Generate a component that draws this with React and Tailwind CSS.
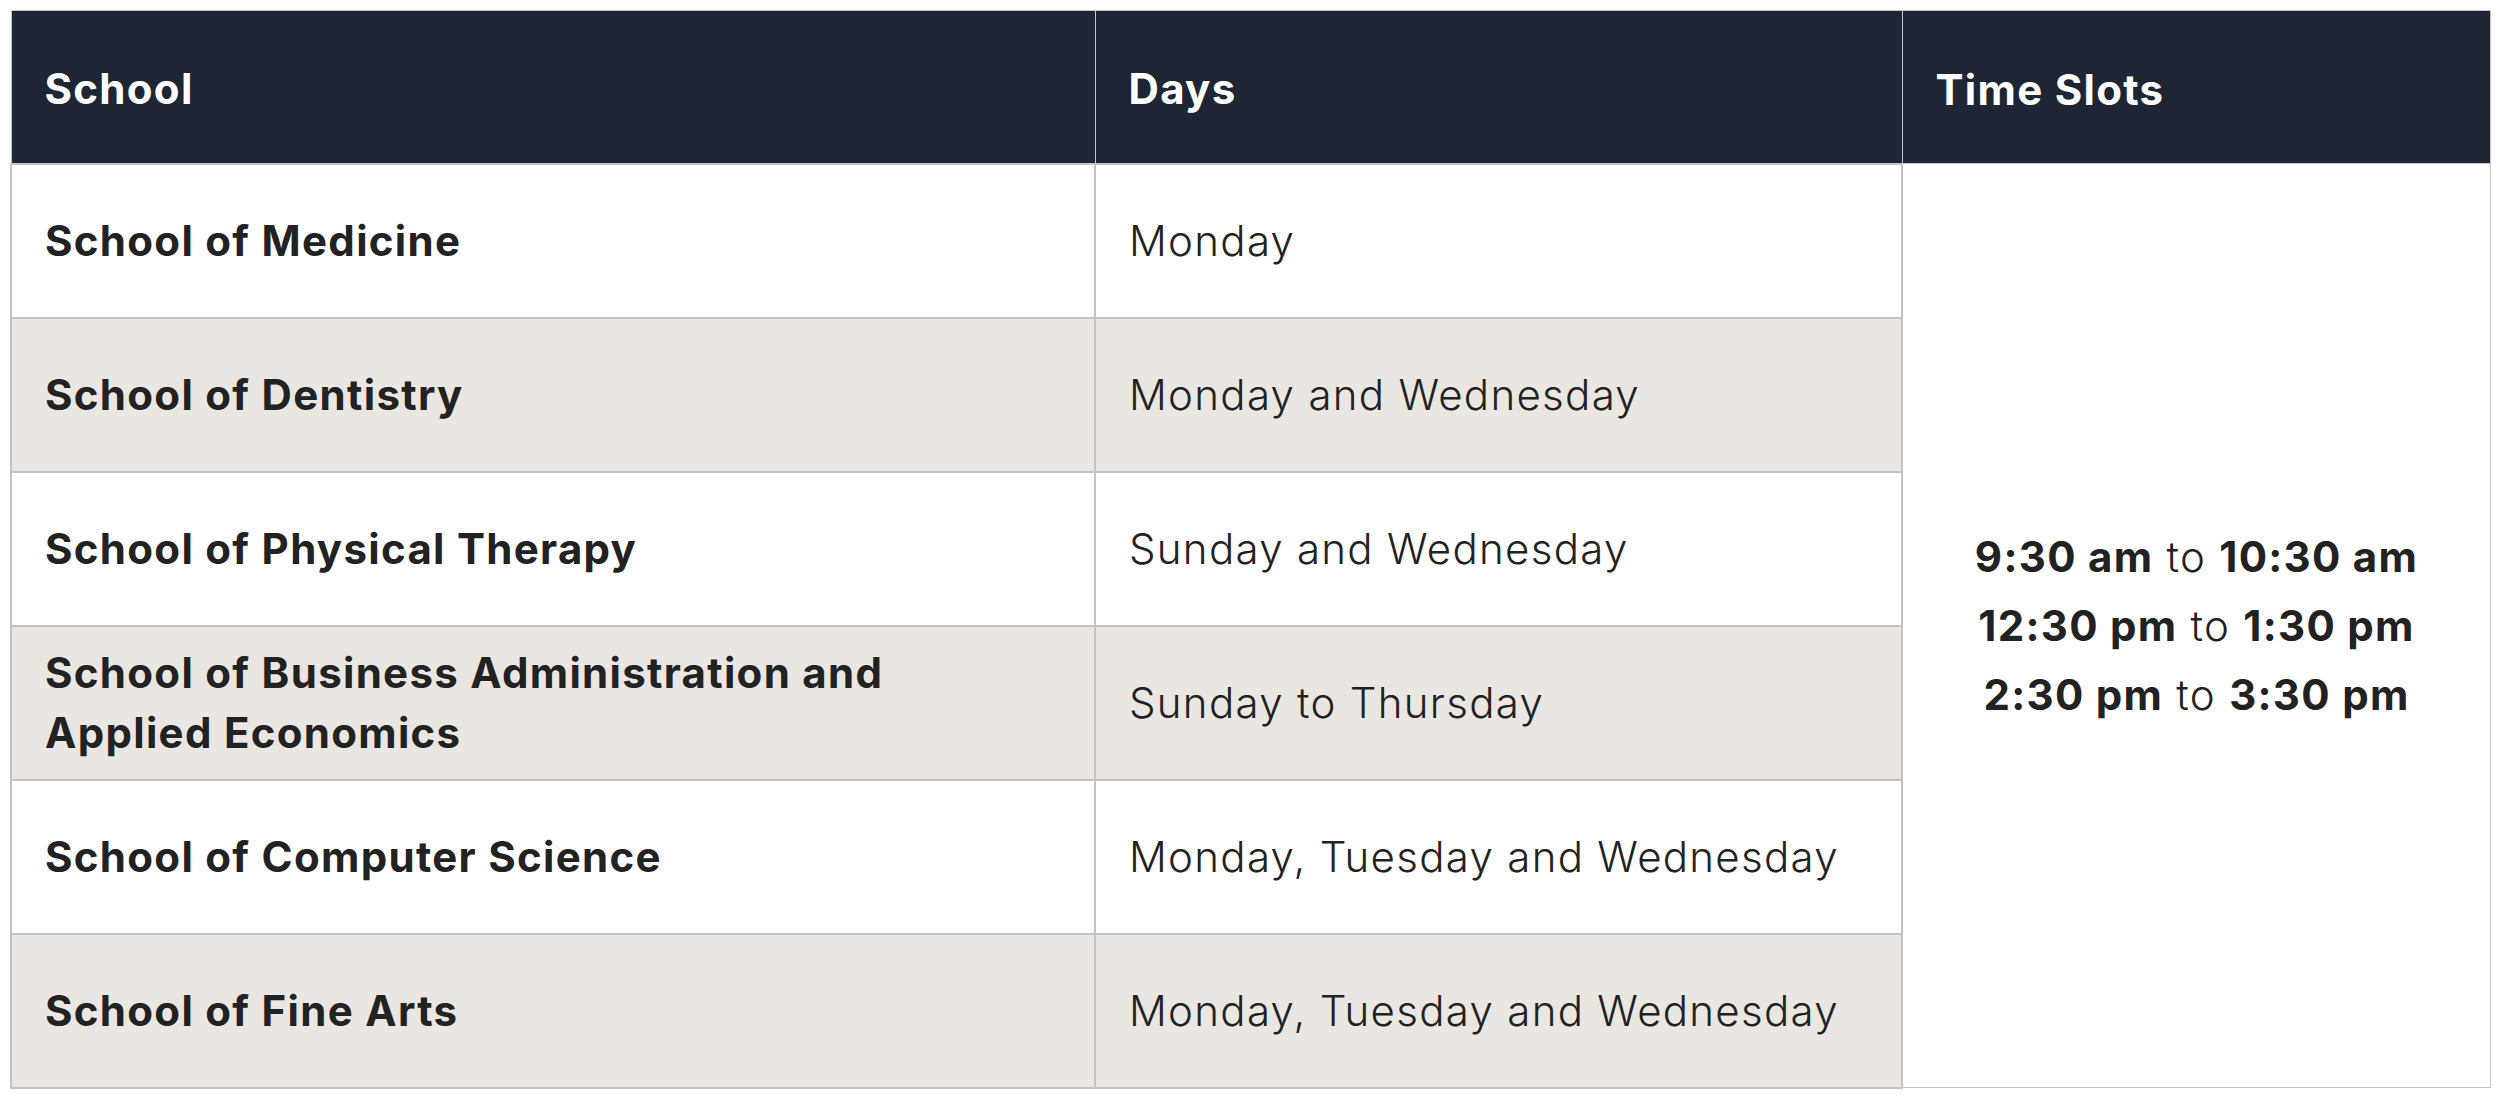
import React from "react";

const rows = [
  { school: "School of Medicine", days: "Monday" },
  { school: "School of Dentistry", days: "Monday and Wednesday" },
  { school: "School of Physical Therapy", days: "Sunday and Wednesday" },
  {
    school: "School of Business Administration and Applied Economics",
    days: "Sunday to Thursday",
  },
  { school: "School of Computer Science", days: "Monday, Tuesday and Wednesday" },
  { school: "School of Fine Arts", days: "Monday, Tuesday and Wednesday" },
];

const slots = [
  ["9:30 am", "10:30 am"],
  ["12:30 pm", "1:30 pm"],
  ["2:30 pm", "3:30 pm"],
];

function App() {
  return (
    <div className="bg-white p-[10px] font-[Inter,sans-serif] text-[#222222] tracking-[1.3px]">
      <table className="w-full table-fixed border-collapse">
        <colgroup>
          <col className="w-[1084px]" />
          <col className="w-[807px]" />
          <col />
        </colgroup>
        <thead>
          <tr className="h-[153px] bg-[#1e2636] text-left text-[42px] font-bold text-white">
            <th className="border border-[#c4c4c4] px-[33px] pt-[4px]">School</th>
            <th className="border border-[#c4c4c4] px-[33px] pt-[4px]">Days</th>
            <th className="border border-[#c4c4c4] px-[33px] pt-[4px]">Time Slots</th>
          </tr>
        </thead>
        <tbody className="text-[42px] leading-[60px]">
          {rows.map((row, i) => (
            <tr
              key={row.school}
              className={i % 2 === 1 ? "h-[154px] bg-[#eae7e2]" : "h-[154px] bg-white"}
            >
              <td className="border-2 border-[#c4c4c4] px-[33px] pr-[160px] font-bold">
                {row.school}
              </td>
              <td className="border-2 border-[#c4c4c4] px-[33px] font-light">{row.days}</td>
              {i === 0 && (
                <td rowSpan={6} className="border border-[#c4c4c4] bg-white text-center">
                  {slots.map(([from, to]) => (
                    <div key={from} className="leading-[69px]">
                      <span className="font-bold">{from}</span>
                      <span className="font-light"> to </span>
                      <span className="font-bold">{to}</span>
                    </div>
                  ))}
                </td>
              )}
            </tr>
          ))}
        </tbody>
      </table>
    </div>
  );
}

export default App;
